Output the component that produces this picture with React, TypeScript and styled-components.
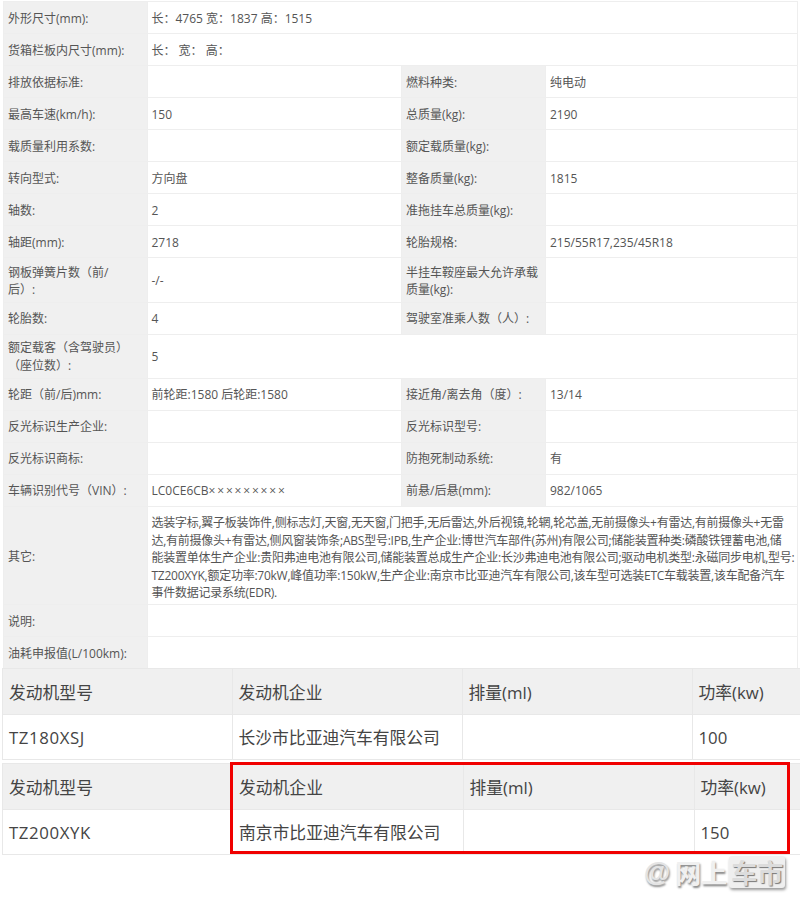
import type { ReactNode } from "react";
import styled, { createGlobalStyle } from "styled-components";

const GlobalStyle = createGlobalStyle`
  html, body {
    margin: 0;
    padding: 0;
    background: #fff;
  }
`;

const Page = styled.div`
  position: relative;
  width: 800px;
  height: 897px;
  overflow: hidden;
  padding-top: 1px;
  box-sizing: border-box;
  font-family: "Open Sans", "Noto Sans CJK SC", sans-serif;
  color: #555;
`;

const SpecTable = styled.table`
  table-layout: fixed;
  border-collapse: collapse;
  width: 794px;
  margin-left: 3px;
  font-size: 12px;
  line-height: 17.4px;
`;

const Col = styled.col<{ $width: number }>`
  width: ${(p) => p.$width}px;
`;

const Label = styled.td`
  background: #f0f0f0;
  border: 1px solid #eee;
  padding: 2px 4px 0;
  box-sizing: border-box;
  white-space: pre-line;
`;

const Value = styled.td`
  background: #fff;
  border: 1px solid #eee;
  padding: 2px 4px 0;
  box-sizing: border-box;
  white-space: nowrap;
`;

// $tight rows sit a pixel higher, as the lower half of the table does
const SpecRow = styled.tr<{ $height?: number; $tight?: boolean }>`
  height: ${(p) => p.$height ?? 32}px;

  & > td {
    ${(p) => (p.$tight ? "padding-top: 0;" : "")}
  }
`;

const LongText = styled.div`
  padding-top: 3px;
  font-size: 12px;
  line-height: 17.6px;
  letter-spacing: -0.25px;
  white-space: nowrap;
`;

const Masked = styled.span`
  letter-spacing: 1.8px;
`;

const EngineBlock = styled.div<{ $gap: number }>`
  position: relative;
  margin-top: ${(p) => p.$gap}px;
`;

const EngineTable = styled.table`
  table-layout: fixed;
  border-collapse: collapse;
  width: 798px;
  margin-left: 2px;
  font-size: 16.8px;
  color: #444;
`;

const EngineHead = styled.td`
  height: 46px;
  background: #f0f0f0;
  border: 1px solid #e8e8e8;
  padding: 0 6px;
  box-sizing: border-box;
`;

const EngineCell = styled.td`
  height: 45px;
  background: #fff;
  border: 1px solid #e8e8e8;
  padding: 0 6px;
  box-sizing: border-box;

  &:first-child {
    letter-spacing: 0.6px;
  }
`;

const Highlight = styled.div`
  position: absolute;
  left: 230px;
  top: -1px;
  width: 560px;
  height: 92px;
  border: 3px solid #f00000;
  box-sizing: border-box;
  pointer-events: none;
`;

const Watermark = styled.div`
  position: absolute;
  left: 644px;
  top: 856px;
  display: flex;
  align-items: center;
  height: 32px;
  font-family: "Noto Sans CJK SC", sans-serif;
  font-weight: 700;
  font-size: 26px;
  line-height: 32px;
  color: #f0f0f0;
  text-shadow: 1px 2px 2px #8a8a8a;
`;

const WatermarkAt = styled.span`
  font-family: "Liberation Sans", sans-serif;
  font-size: 27px;
  margin-right: 5px;
  color: #e4e4e4;
`;

const WatermarkBadge = styled.span`
  margin-left: 2px;
  padding: 0 2px;
  background: #efefef;
  border-radius: 3px;
  box-shadow: 1px 2px 3px #999;
  color: #dcdcdc;
  text-shadow: 1px 1px 1px #777;
`;

type Spec = {
  height?: number;
  tight?: boolean;
  cells: [string, ReactNode] | [string, ReactNode, string, ReactNode];
};

const specs: Spec[] = [
  { cells: ["外形尺寸(mm):", "长：4765 宽：1837 高：1515"] },
  { cells: ["货箱栏板内尺寸(mm):", "长： 宽： 高："] },
  { cells: ["排放依据标准:", "", "燃料种类:", "纯电动"] },
  { cells: ["最高车速(km/h):", "150", "总质量(kg):", "2190"] },
  { cells: ["载质量利用系数:", "", "额定载质量(kg):", ""] },
  { cells: ["转向型式:", "方向盘", "整备质量(kg):", "1815"] },
  { cells: ["轴数:", "2", "准拖挂车总质量(kg):", ""] },
  { cells: ["轴距(mm):", "2718", "轮胎规格:", "215/55R17,235/45R18"] },
  { height: 45, cells: ["钢板弹簧片数（前/\n后）:", "-/-", "半挂车鞍座最大允许承载\n质量(kg):", ""] },
  { tight: true, cells: ["轮胎数:", "4", "驾驶室准乘人数（人）:", ""] },
  { height: 44, tight: true, cells: ["额定载客（含驾驶员）\n（座位数）:", "5"] },
  { tight: true, cells: ["轮距（前/后)mm:", "前轮距:1580 后轮距:1580", "接近角/离去角（度）:", "13/14"] },
  { tight: true, cells: ["反光标识生产企业:", "", "反光标识型号:", ""] },
  { tight: true, cells: ["反光标识商标:", "", "防抱死制动系统:", "有"] },
  {
    tight: true,
    cells: [
      "车辆识别代号（VIN）:",
      <>
        LC0CE6CB<Masked>×××××××××</Masked>
      </>,
      "前悬/后悬(mm):",
      "982/1065",
    ],
  },
];

const otherLines = [
  "选装字标,翼子板装饰件,侧标志灯,天窗,无天窗,门把手,无后雷达,外后视镜,轮辋,轮芯盖,无前摄像头+有雷达,有前摄像头+无雷",
  "达,有前摄像头+有雷达,侧风窗装饰条;ABS型号:IPB,生产企业:博世汽车部件(苏州)有限公司;储能装置种类:磷酸铁锂蓄电池,储",
  "能装置单体生产企业:贵阳弗迪电池有限公司,储能装置总成生产企业:长沙弗迪电池有限公司;驱动电机类型:永磁同步电机,型号:",
  "TZ200XYK,额定功率:70kW,峰值功率:150kW,生产企业:南京市比亚迪汽车有限公司,该车型可选装ETC车载装置,该车配备汽车",
  "事件数据记录系统(EDR).",
];

const engineHeads = ["发动机型号", "发动机企业", "排量(ml)", "功率(kw)"];

function EngineInfo({ widths, row }: { widths: number[]; row: string[] }) {
  return (
    <EngineTable>
      <colgroup>
        {widths.map((w, i) => (
          <Col key={i} $width={w} />
        ))}
      </colgroup>
      <tbody>
        <tr>
          {engineHeads.map((h) => (
            <EngineHead key={h}>{h}</EngineHead>
          ))}
        </tr>
        <tr>
          {row.map((c, i) => (
            <EngineCell key={i}>{c}</EngineCell>
          ))}
        </tr>
      </tbody>
    </EngineTable>
  );
}

export default function App() {
  return (
    <>
      <GlobalStyle />
      <Page>
        <SpecTable>
          <colgroup>
            <Col $width={143.5} />
            <Col $width={254.5} />
            <Col $width={144} />
            <Col $width={252} />
          </colgroup>
          <tbody>
            {specs.map((s) => (
              <SpecRow key={s.cells[0]} $height={s.height} $tight={s.tight}>
                <Label>{s.cells[0]}</Label>
                {s.cells.length === 2 ? (
                  <Value colSpan={3}>{s.cells[1]}</Value>
                ) : (
                  <>
                    <Value>{s.cells[1]}</Value>
                    <Label>{s.cells[2]}</Label>
                    <Value>{s.cells[3]}</Value>
                  </>
                )}
              </SpecRow>
            ))}
            <SpecRow $height={98}>
              <Label>其它:</Label>
              <Value colSpan={3}>
                <LongText>
                  {otherLines.map((l) => (
                    <div key={l}>{l}</div>
                  ))}
                </LongText>
              </Value>
            </SpecRow>
            <SpecRow>
              <Label>说明:</Label>
              <Value colSpan={3} />
            </SpecRow>
            <SpecRow>
              <Label>油耗申报值(L/100km):</Label>
              <Value colSpan={3} />
            </SpecRow>
          </tbody>
        </SpecTable>
        <EngineBlock $gap={-1}>
          <EngineInfo
            widths={[229.5, 230, 230, 108.5]}
            row={["TZ180XSJ", "长沙市比亚迪汽车有限公司", "", "100"]}
          />
        </EngineBlock>
        <EngineBlock $gap={3}>
          <EngineInfo
            widths={[230, 230.5, 231, 106.5]}
            row={["TZ200XYK", "南京市比亚迪汽车有限公司", "", "150"]}
          />
          <Highlight />
        </EngineBlock>
        <Watermark>
          <WatermarkAt>@</WatermarkAt>
          网上
          <WatermarkBadge>车市</WatermarkBadge>
        </Watermark>
      </Page>
    </>
  );
}
